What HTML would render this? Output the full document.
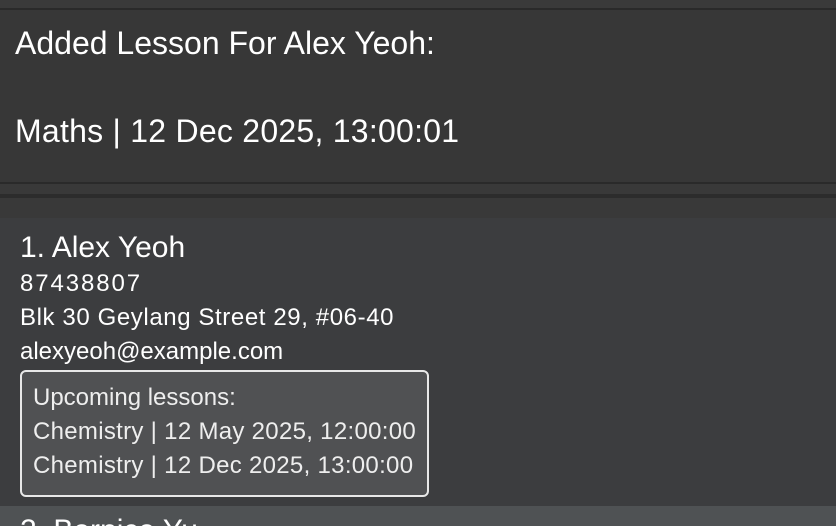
<!DOCTYPE html>
<html><head><style>
html,body{margin:0;width:836px;height:526px;overflow:hidden}
body{background:#3a3a3a;font-family:"Liberation Sans",sans-serif;color:#fff;position:relative}
div{position:absolute}
.t{white-space:nowrap}
</style></head><body>
<div style="left:0;top:0;width:836px;height:8px;background:#3a3a3a"></div>
<div style="left:0;top:8px;width:836px;height:2px;background:#2a2a2a"></div>
<div style="left:0;top:10px;width:836px;height:172px;background:#373737"></div>
<div class="t" style="left:15px;top:25px;font-size:32px">Added Lesson For Alex Yeoh:</div>
<div class="t" style="left:15px;top:113px;font-size:32px;letter-spacing:0.25px">Maths | 12 Dec 2025, 13:00:01</div>
<div style="left:0;top:182px;width:836px;height:2px;background:#2a2a2a"></div>
<div style="left:0;top:184px;width:836px;height:10px;background:#393939"></div>
<div style="left:0;top:194px;width:836px;height:4px;background:#2c2c2c"></div>
<div style="left:0;top:198px;width:836px;height:20px;background:#393939"></div>
<div style="left:0;top:218px;width:836px;height:288px;background:#3c3d3f"></div>
<div class="t" style="left:20px;top:231px;font-size:30px">1. Alex Yeoh</div>
<div class="t" style="left:20px;top:270px;font-size:24px;letter-spacing:1.9px">87438807</div>
<div class="t" style="left:20px;top:304px;font-size:24px;letter-spacing:0.6px">Blk 30 Geylang Street 29, #06-40</div>
<div class="t" style="left:20px;top:338px;font-size:24px">alexyeoh@example.com</div>
<div style="left:20px;top:370px;width:405px;height:123px;border:2px solid #e8e8e8;border-radius:6px;background:#505153"></div>
<div class="t" style="left:33px;top:384px;font-size:24px;color:#eee">Upcoming lessons:</div>
<div class="t" style="left:33px;top:418px;font-size:24px;letter-spacing:0.3px;color:#eee">Chemistry | 12 May 2025, 12:00:00</div>
<div class="t" style="left:33px;top:452px;font-size:24px;letter-spacing:0.3px;color:#eee">Chemistry | 12 Dec 2025, 13:00:00</div>
<div style="left:0;top:506px;width:836px;height:20px;background:#4f5254"></div>
<div class="t" style="left:20px;top:514px;font-size:30px">2. Bernice Yu</div>
</body></html>
